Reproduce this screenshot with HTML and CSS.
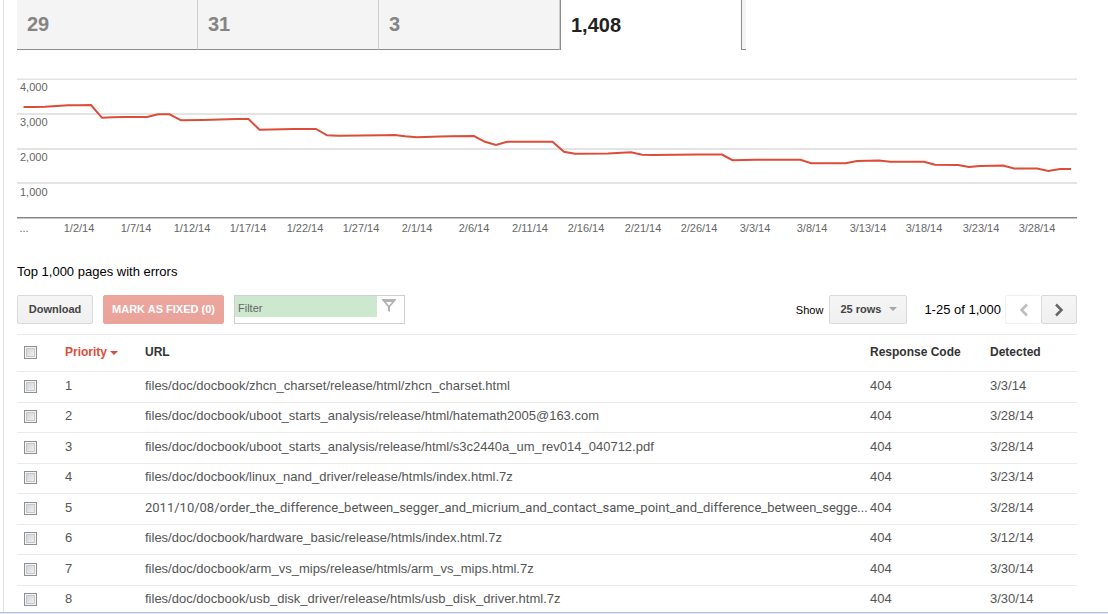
FILE: index.html
```html
<!DOCTYPE html>
<html lang="en">
<head>
<meta charset="utf-8">
<title>Crawl Errors</title>
<link rel="stylesheet" href="styles.css">
</head>
<body>
<main class="pane">
  <nav class="tabs">
    <button class="tab" type="button">29</button>
    <button class="tab" type="button">31</button>
    <button class="tab" type="button">3</button>
    <button class="tab tab-active" type="button">1,408</button>
    <span class="tabs-rest"></span>
  </nav>

  <svg class="chart" viewBox="17 70 1060 170" role="img" aria-label="Errors over time">
    <g class="grid">
      <path d="M17 79.2H1077" stroke-width="1.6"/>
      <path d="M17 114H1077M17 149H1077M17 183H1077" stroke-width="2"/>
    </g>
    <path d="M17 217.5H1077" stroke="#858585"/>
    <path d="M17 218.5H1077" stroke="#c6c6c6"/>
    <polyline class="series" points="23.5,107 34.5,107 45,106.8 57,106 68,105.3 79,105.2 91,105 102,117.8 113,117.2 124,117 147,117 158,114.3 169.5,114.3 181,120.3 203,120.1 237,119.1 248.5,119.1 259.5,129.8 294,129 316,128.9 327,135.3 338,135.7 383,135.2 394.5,134.9 405,136.3 417,137.2 440,136.5 451,136.2 474,136.1 485,141.8 496,145 507,141.8 552.5,141.7 564,151.8 575,153.8 608,153.5 631,152.3 642,154.8 653,155.1 698,154.5 722,154.5 732.5,160.2 755,159.8 800.5,159.8 811,163.3 845.5,163.3 857,161 879,160.4 890,161.8 924,161.8 935,164.8 958,164.9 969,166.9 980,165.9 1003,165.6 1014,168.5 1037,168.5 1048.5,171 1060,169 1071,169"/>
    <g class="axis">
      <text x="20" y="91">4,000</text>
      <text x="20" y="126">3,000</text>
      <text x="20" y="161">2,000</text>
      <text x="20" y="196">1,000</text>
    </g>
    <g class="axis axis-x">
      <text x="24" y="232">...</text>
      <text x="79" y="232">1/2/14</text>
      <text x="136" y="232">1/7/14</text>
      <text x="192" y="232">1/12/14</text>
      <text x="248" y="232">1/17/14</text>
      <text x="305" y="232">1/22/14</text>
      <text x="361" y="232">1/27/14</text>
      <text x="417" y="232">2/1/14</text>
      <text x="474" y="232">2/6/14</text>
      <text x="530" y="232">2/11/14</text>
      <text x="586" y="232">2/16/14</text>
      <text x="643" y="232">2/21/14</text>
      <text x="699" y="232">2/26/14</text>
      <text x="755" y="232">3/3/14</text>
      <text x="812" y="232">3/8/14</text>
      <text x="868" y="232">3/13/14</text>
      <text x="924" y="232">3/18/14</text>
      <text x="981" y="232">3/23/14</text>
      <text x="1037" y="232">3/28/14</text>
    </g>
  </svg>

  <h2 class="title">Top 1,000 pages with errors</h2>

  <div class="toolbar">
    <button class="btn btn-download" type="button">Download</button>
    <button class="btn btn-fixed" type="button">MARK AS FIXED (0)</button>
    <div class="filter">
      <input class="filter-input" type="text" placeholder="Filter" aria-label="Filter">
      <svg class="filter-icon" width="16" height="16" viewBox="0 0 16 16" aria-hidden="true">
        <path fill="#b3b3b3" fill-rule="evenodd" d="M1 1H15V2L9 9V14L7 13V9L1 2ZM5 4L8 7.500L11 4Z"/>
      </svg>
    </div>
    <div class="pager">
      <label class="show" for="rows">Show</label>
      <div class="rows">
        <select class="btn rows-select" id="rows">
          <option>25 rows</option>
          <option>50 rows</option>
        </select>
        <svg class="rows-caret" width="8" height="4" viewBox="0 0 8 4" aria-hidden="true"><path fill="#a6a6a6" d="M0 0H8L4 4Z"/></svg>
      </div>
      <span class="range">1-25 of 1,000</span>
      <div class="steps">
        <button class="btn step step-off" type="button" aria-label="Previous page">
          <svg width="10" height="14" viewBox="0 0 10 14"><path d="M8 1.500L2.500 7L8 12.500" fill="none" stroke="#bdbdbd" stroke-width="2.500"/></svg>
        </button>
        <button class="btn step" type="button" aria-label="Next page">
          <svg width="10" height="14" viewBox="0 0 10 14"><path d="M2 1.500L7.500 7L2 12.500" fill="none" stroke="#666" stroke-width="2.500"/></svg>
        </button>
      </div>
    </div>
  </div>

  <table class="errors">
    <colgroup>
      <col class="col-check"><col class="col-priority"><col><col class="col-code"><col class="col-date">
    </colgroup>
    <thead>
      <tr>
        <th class="check"><input type="checkbox" aria-label="Select all"></th>
        <th class="sorted">Priority <svg class="sort-caret" width="8" height="4" viewBox="0 0 8 4" aria-hidden="true"><path fill="#dd4b39" d="M0 0H8L4 4Z"/></svg></th>
        <th>URL</th><th>Response Code</th><th>Detected</th>
      </tr>
    </thead>
    <tbody>
      <tr><td class="check"><input type="checkbox" aria-label="Select 1"></td><td>1</td><td class="url">files/doc/docbook/zhcn_charset/release/html/zhcn_charset.html</td><td>404</td><td>3/3/14</td></tr>
      <tr><td class="check"><input type="checkbox" aria-label="Select 2"></td><td>2</td><td class="url">files/doc/docbook/uboot_starts_analysis/release/html/hatemath2005@163.com</td><td>404</td><td>3/28/14</td></tr>
      <tr><td class="check"><input type="checkbox" aria-label="Select 3"></td><td>3</td><td class="url">files/doc/docbook/uboot_starts_analysis/release/html/s3c2440a_um_rev014_040712.pdf</td><td>404</td><td>3/28/14</td></tr>
      <tr><td class="check"><input type="checkbox" aria-label="Select 4"></td><td>4</td><td class="url">files/doc/docbook/linux_nand_driver/release/htmls/index.html.7z</td><td>404</td><td>3/23/14</td></tr>
      <tr><td class="check"><input type="checkbox" aria-label="Select 5"></td><td>5</td><td class="url url-long">2011/10/08/order_the_difference_between_segger_and_micrium_and_contact_same_point_and_difference_between_segge...</td><td>404</td><td>3/28/14</td></tr>
      <tr><td class="check"><input type="checkbox" aria-label="Select 6"></td><td>6</td><td class="url">files/doc/docbook/hardware_basic/release/htmls/index.html.7z</td><td>404</td><td>3/12/14</td></tr>
      <tr><td class="check"><input type="checkbox" aria-label="Select 7"></td><td>7</td><td class="url">files/doc/docbook/arm_vs_mips/release/htmls/arm_vs_mips.html.7z</td><td>404</td><td>3/30/14</td></tr>
      <tr><td class="check"><input type="checkbox" aria-label="Select 8"></td><td>8</td><td class="url">files/doc/docbook/usb_disk_driver/release/htmls/usb_disk_driver.html.7z</td><td>404</td><td>3/30/14</td></tr>
    </tbody>
  </table>
</main>
</body>
</html>
```

FILE: styles.css
```css
* {
  box-sizing: border-box;
}

body {
  margin: 0;
  height: 100vh;
  display: flex;
  flex-direction: column;
  border-bottom: 1px solid #dfe9f5;
  background: #fff;
  color: #000;
  font-family: "Liberation Sans", Arial, sans-serif;
  font-size: 13px;
}

button, input, select {
  font: inherit;
}

.pane {
  flex: 1;
  min-height: 0;
  overflow-y: auto;
  scrollbar-width: none;
  padding: 0 31px 0 17px;
  border-bottom: 1px solid #b0c1d8;
  background: linear-gradient(#e0e0e0, #e0e0e0) 3px 0 / 1px 100% no-repeat;
}

.tabs {
  display: flex;
  height: 50px;
}

.tab {
  width: 181px;
  padding: 0 10px;
  border: 0;
  border-right: 1px solid #ccc;
  border-bottom: 1px solid #8c8c8c;
  background: #f4f4f4;
  color: #848484;
  font-size: 20px;
  font-weight: bold;
  text-align: left;
}

.tab-active {
  width: 182px;
  border: solid #8c8c8c;
  border-width: 0 1px;
  background: #fff;
  color: #222;
}

.tabs-rest {
  width: 4px;
  border-bottom: 1px solid #8c8c8c;
  background: #f4f4f4;
}

.chart {
  display: block;
  width: 100%;
  margin-top: 20px;
}

.grid {
  stroke: #e4e4e4;
}

.series {
  fill: none;
  stroke: #dd4b39;
  stroke-width: 2;
}

.axis {
  fill: #666;
  font-size: 11px;
}

.axis-x {
  text-anchor: middle;
}

.title {
  margin: 24px 0 0;
  font-size: 13px;
  font-weight: normal;
  line-height: 16px;
}

.toolbar {
  display: flex;
  align-items: center;
  gap: 10px;
  margin-top: 15px;
}

.btn {
  height: 29px;
  padding: 0 10px;
  border: 1px solid #d9d9d9;
  border-radius: 2px;
  background: linear-gradient(#f5f5f5, #f0f0f0);
  color: #444;
  font-size: 11px;
  font-weight: bold;
  line-height: 13px;
}

.btn-download {
  width: 76px;
}

.btn-fixed {
  width: 121px;
  padding: 0;
  border-color: #e9a49c;
  background: linear-gradient(#eda69d, #e9a39b);
  color: #fff;
}

.filter {
  display: flex;
  width: 171px;
  height: 29px;
  border: 1px solid #d0d0d0;
}

.filter-input {
  width: 142px;
  height: 21px;
  padding: 3px 3px 0;
  border: 0;
  background: #cce8cf;
  color: #666;
  font-size: 11px;
}

.filter-input::placeholder {
  color: #666;
  opacity: 1;
}

.filter-icon {
  margin: 2px 0 0 4px;
}

.pager {
  display: flex;
  align-items: center;
  margin-left: auto;
}

.show {
  margin-right: 6px;
  font-size: 11px;
}

.rows {
  position: relative;
}

.rows-select {
  display: block;
  width: 78px;
  appearance: none;
}

.rows-caret {
  position: absolute;
  top: 12px;
  right: 10px;
  pointer-events: none;
}

.range {
  margin: 0 4px 0 17px;
}

.steps {
  display: flex;
}

.step {
  display: flex;
  align-items: center;
  justify-content: center;
  width: 36px;
  padding: 0;
}

.step-off {
  border-color: #f0f0f0;
  border-right: 0;
  background: #fff;
}

.errors {
  width: 100%;
  margin-top: 10px;
  border-top: 1px solid #ebebeb;
  border-collapse: separate;
  border-spacing: 0;
  table-layout: fixed;
  color: #555;
}

.col-check {
  width: 48px;
}

.col-priority {
  width: 80px;
}

.col-code {
  width: 120px;
}

.col-date {
  width: 87px;
}

.errors th,
.errors td {
  height: 31px;
  padding: 0 0 3px;
  border-bottom: 1px solid #ebebeb;
  line-height: 16px;
  text-align: left;
}

.errors th {
  height: 37px;
  padding-bottom: 2px;
  color: #333;
  font-size: 12px;
}

.errors tr:nth-child(even) td {
  height: 30px;
}

.errors .sorted {
  color: #dd4b39;
}

.sort-caret {
  margin: 0 0 1px;
}

.errors .check {
  padding: 0 0 2px 7px;
}

.errors .url {
  white-space: nowrap;
}

.errors .url-long {
  font-family: Roboto, "Liberation Sans", sans-serif;
}

.check input {
  display: block;
  width: 13px;
  height: 13px;
  margin: 0;
  border: 1px solid #8e8f8f;
  box-shadow: inset 0 0 0 1px #f4f4f4, inset 0 0 0 2px #c4c8cc;
  background: linear-gradient(135deg, #c9ced3, #f6f6f6);
  appearance: none;
}
```
